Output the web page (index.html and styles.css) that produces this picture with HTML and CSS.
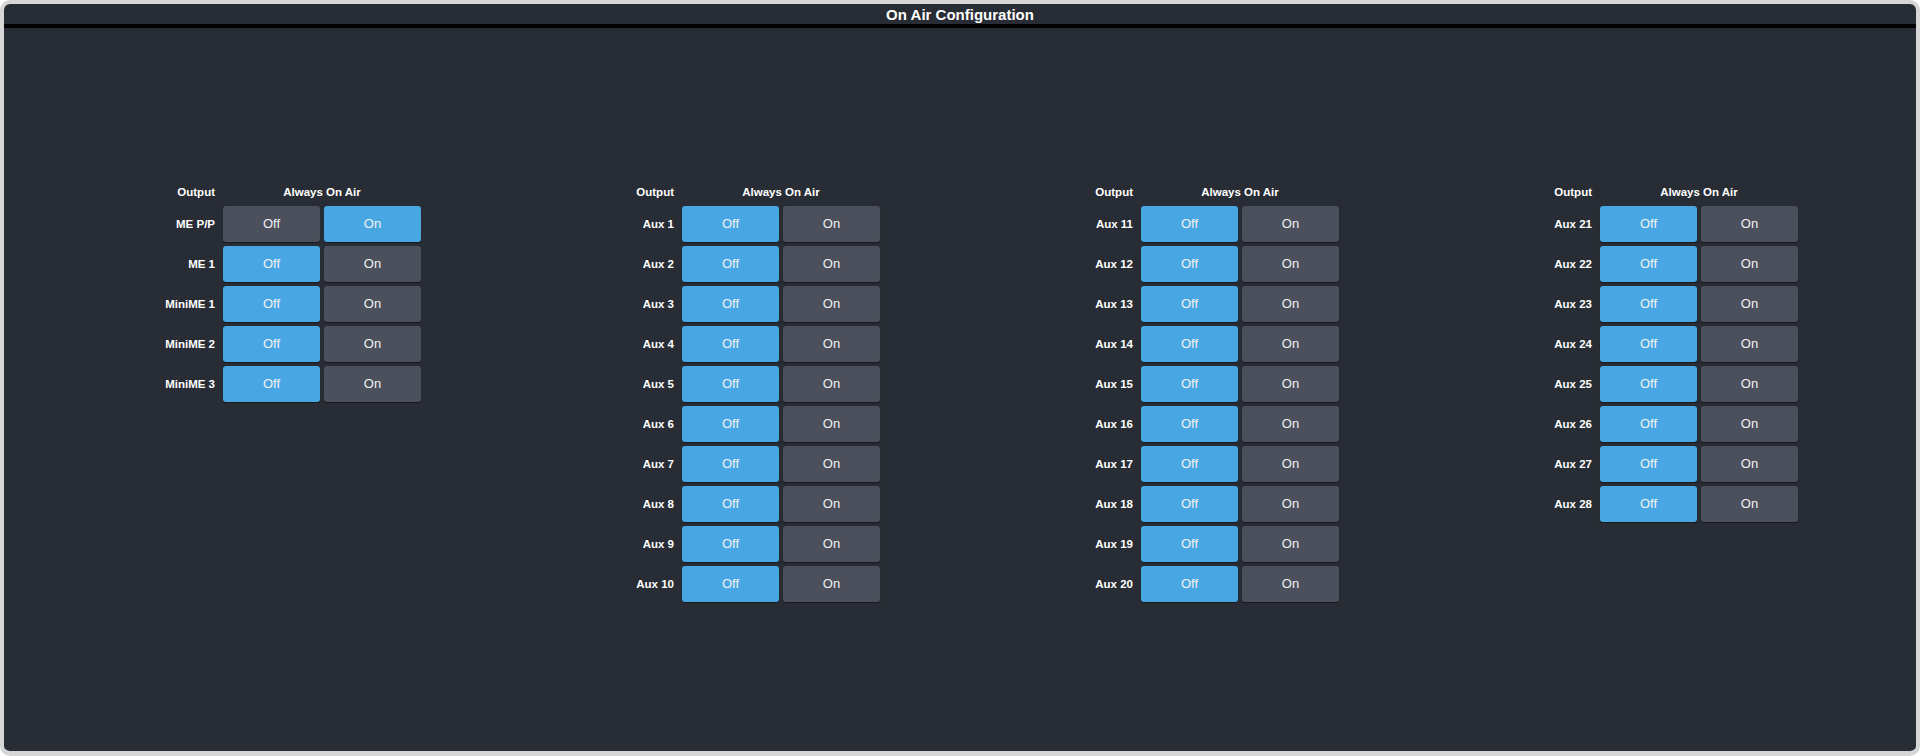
FILE: index.html
```html
<!DOCTYPE html>
<html>
<head>
<meta charset="utf-8">
<title>On Air Configuration</title>
<link rel="stylesheet" href="styles.css">
</head>
<body>
<div class="frame">
  <div class="title">On Air Configuration</div>
  <div class="content">
    <div class="groups">
      <div class="group">
        <div class="hdr label">Output</div><div class="hdr span2">Always On Air</div>
        <div class="label">ME P/P</div><div class="btn">Off</div><div class="btn active">On</div>
        <div class="label">ME 1</div><div class="btn active">Off</div><div class="btn">On</div>
        <div class="label">MiniME 1</div><div class="btn active">Off</div><div class="btn">On</div>
        <div class="label">MiniME 2</div><div class="btn active">Off</div><div class="btn">On</div>
        <div class="label">MiniME 3</div><div class="btn active">Off</div><div class="btn">On</div>
      </div>
      <div class="group">
        <div class="hdr label">Output</div><div class="hdr span2">Always On Air</div>
        <div class="label">Aux 1</div><div class="btn active">Off</div><div class="btn">On</div>
        <div class="label">Aux 2</div><div class="btn active">Off</div><div class="btn">On</div>
        <div class="label">Aux 3</div><div class="btn active">Off</div><div class="btn">On</div>
        <div class="label">Aux 4</div><div class="btn active">Off</div><div class="btn">On</div>
        <div class="label">Aux 5</div><div class="btn active">Off</div><div class="btn">On</div>
        <div class="label">Aux 6</div><div class="btn active">Off</div><div class="btn">On</div>
        <div class="label">Aux 7</div><div class="btn active">Off</div><div class="btn">On</div>
        <div class="label">Aux 8</div><div class="btn active">Off</div><div class="btn">On</div>
        <div class="label">Aux 9</div><div class="btn active">Off</div><div class="btn">On</div>
        <div class="label">Aux 10</div><div class="btn active">Off</div><div class="btn">On</div>
      </div>
      <div class="group">
        <div class="hdr label">Output</div><div class="hdr span2">Always On Air</div>
        <div class="label">Aux 11</div><div class="btn active">Off</div><div class="btn">On</div>
        <div class="label">Aux 12</div><div class="btn active">Off</div><div class="btn">On</div>
        <div class="label">Aux 13</div><div class="btn active">Off</div><div class="btn">On</div>
        <div class="label">Aux 14</div><div class="btn active">Off</div><div class="btn">On</div>
        <div class="label">Aux 15</div><div class="btn active">Off</div><div class="btn">On</div>
        <div class="label">Aux 16</div><div class="btn active">Off</div><div class="btn">On</div>
        <div class="label">Aux 17</div><div class="btn active">Off</div><div class="btn">On</div>
        <div class="label">Aux 18</div><div class="btn active">Off</div><div class="btn">On</div>
        <div class="label">Aux 19</div><div class="btn active">Off</div><div class="btn">On</div>
        <div class="label">Aux 20</div><div class="btn active">Off</div><div class="btn">On</div>
      </div>
      <div class="group">
        <div class="hdr label">Output</div><div class="hdr span2">Always On Air</div>
        <div class="label">Aux 21</div><div class="btn active">Off</div><div class="btn">On</div>
        <div class="label">Aux 22</div><div class="btn active">Off</div><div class="btn">On</div>
        <div class="label">Aux 23</div><div class="btn active">Off</div><div class="btn">On</div>
        <div class="label">Aux 24</div><div class="btn active">Off</div><div class="btn">On</div>
        <div class="label">Aux 25</div><div class="btn active">Off</div><div class="btn">On</div>
        <div class="label">Aux 26</div><div class="btn active">Off</div><div class="btn">On</div>
        <div class="label">Aux 27</div><div class="btn active">Off</div><div class="btn">On</div>
        <div class="label">Aux 28</div><div class="btn active">Off</div><div class="btn">On</div>
      </div>
    </div>
  </div>
</div>
</body>
</html>
```
FILE: styles.css
```css
html, body {
  margin: 0;
  padding: 0;
  background: #ffffff;
}
body {
  font-family: "Liberation Sans", Arial, sans-serif;
}
.frame {
  box-sizing: border-box;
  width: 1920px;
  height: 756px;
  border: 4px solid #d6d6d6;
  border-bottom-width: 5px;
  border-radius: 10px;
  background: #282c34;
  display: flex;
  flex-direction: column;
  overflow: hidden;
}
.title {
  height: 20px;
  line-height: 22px;
  border-bottom: 4px solid #000000;
  color: #ffffff;
  font-size: 15px;
  font-weight: bold;
  text-align: center;
}
.content {
  flex: 1;
  padding-top: 4px;
  display: flex;
  align-items: center;
  justify-content: center;
}
.groups {
  display: grid;
  grid-template-columns: repeat(4, 459px);
  align-items: start;
}
.group {
  justify-self: center;
  display: grid;
  grid-template-columns: repeat(3, 97px);
  grid-auto-rows: 36px;
  grid-template-rows: 20px;
  column-gap: 4px;
  row-gap: 4px;
}
.hdr {
  line-height: 20px;
  color: #ffffff;
  font-size: 11.5px;
  font-weight: bold;
}
.span2 {
  grid-column: span 2;
  text-align: center;
}
.label {
  padding-right: 4px;
  text-align: right;
  color: #ffffff;
  font-size: 11.5px;
  font-weight: bold;
  line-height: 36px;
  white-space: nowrap;
}
.hdr.label {
  line-height: 20px;
}
.btn {
  background: #4b505c;
  color: #f2f2f2;
  font-size: 13px;
  line-height: 36px;
  text-align: center;
  border-radius: 3px;
  box-shadow: 0 1px 1px rgba(0, 0, 0, 0.45);
}
.btn.active {
  background: #48a7e2;
}
```
